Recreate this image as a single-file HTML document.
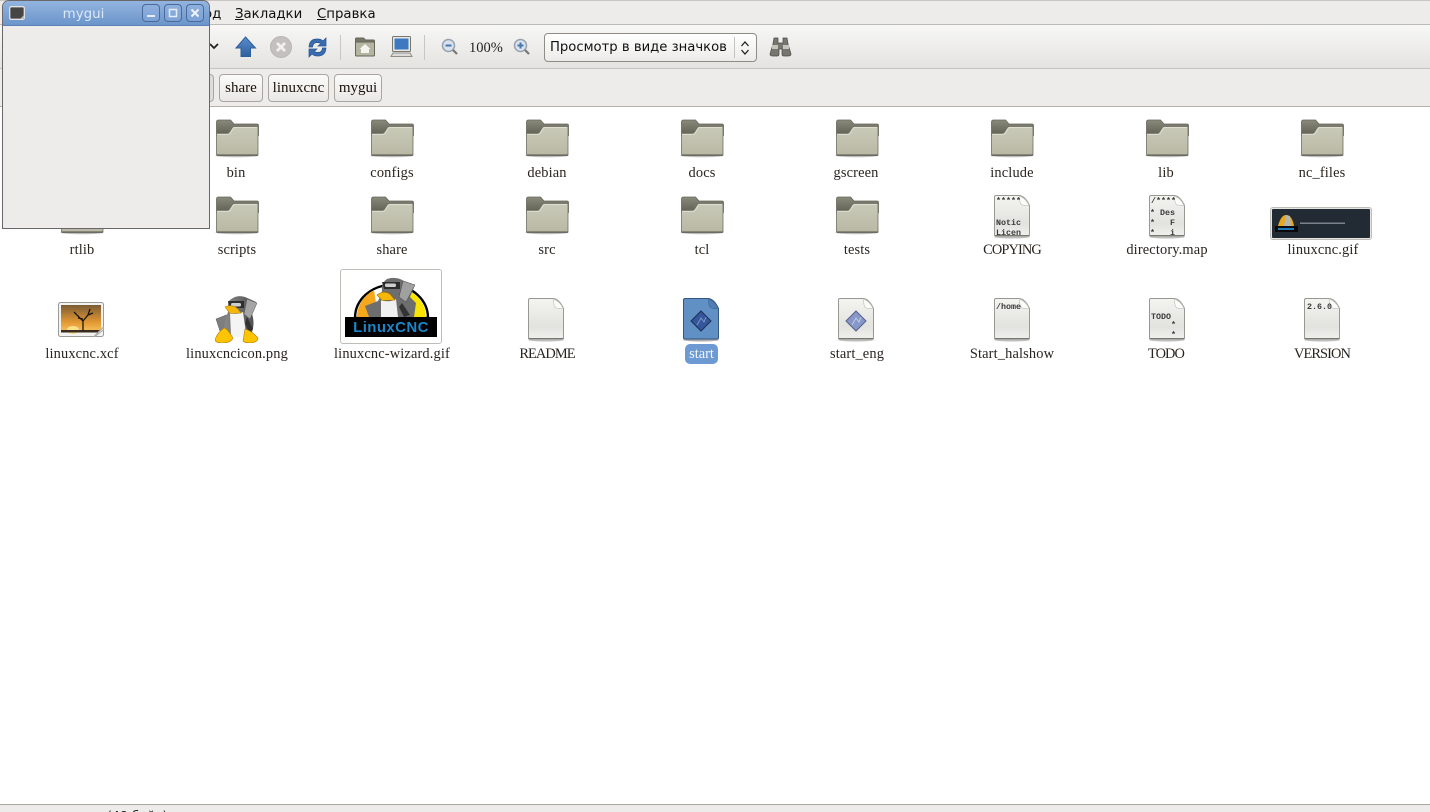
<!DOCTYPE html>
<html lang="ru"><head><meta charset="utf-8"><title>mygui</title>
<style>
html,body{margin:0;padding:0;width:1430px;height:812px;overflow:hidden;background:#fff}
body{position:relative;font-family:"Liberation Serif",serif;color:#1a1a1a}
div,svg,span{position:absolute}
span.u{position:static;text-decoration:underline}
.menubar{left:0;top:0;width:1430px;height:25px;background:#edecea;border-top:1px solid #c8c6c2;box-sizing:border-box}
.menu{top:7px;font:13.3px/16px "DejaVu Sans",sans-serif;color:#111;white-space:nowrap}
.toolbar{left:0;top:24px;width:1430px;height:45px;box-sizing:border-box;background:linear-gradient(#f7f7f6,#e4e3e0);border-top:1px solid #bdbab5;border-bottom:1px solid #c5c3be}
.loc{left:0;top:69px;width:1430px;height:38px;box-sizing:border-box;background:#edecea;border-bottom:1px solid #b5b1ab}
.crumb{top:74px;height:28px;box-sizing:border-box;border:1px solid #a9a6a0;border-radius:4px;background:linear-gradient(#fbfbfa,#e9e8e6);font-size:15px;line-height:26px;text-align:center;color:#1a1208;white-space:nowrap}
.sep{width:1px;top:35px;height:25px;background:#c9c7c3}
.l{width:150px;margin-top:1px;text-align:center;font-size:14.4px;letter-spacing:.15px;line-height:16px;white-space:nowrap;color:#2a2420}
.c{letter-spacing:-.9px}
.combo{left:544px;top:33px;width:213px;height:29px;box-sizing:border-box;border:1px solid #8f8c86;border-radius:4px;background:linear-gradient(#fff,#ecebe9);font:13.2px/27px "DejaVu Sans",sans-serif;color:#111;padding-left:5px;white-space:nowrap}
.status{left:0;top:804px;width:1430px;height:8px;background:#edecea;border-top:1px solid #aca79f;box-sizing:border-box;overflow:hidden}
.win{left:2px;top:0;width:208px;height:229px;box-sizing:border-box;background:#edecea;border:1px solid #68686a;border-radius:7px 7px 0 0;overflow:hidden}
.title{left:0;top:0;width:206px;height:24px;background:linear-gradient(#93b4df,#6b95cb);border-bottom:1px solid #5a80b5}
.wb{top:3px;width:18px;height:18px;box-sizing:border-box;border:1px solid #4a6a9a;border-radius:4px;background:linear-gradient(#8fb1de,#7ba1d4)}
.doctext{font-family:"Liberation Mono",monospace;font-size:8.33px;font-weight:bold;fill:#3a3a3a;white-space:pre}
</style></head><body>

<svg width="0" height="0" style="left:0;top:0">
<defs>
<linearGradient id="fb" x1="0" y1="0" x2="0" y2="1"><stop offset="0" stop-color="#cacab9"/><stop offset="1" stop-color="#b8b8a4"/></linearGradient>
<linearGradient id="bk" x1="0" y1="0" x2="0" y2="1"><stop offset="0" stop-color="#8a8a7b"/><stop offset="1" stop-color="#5e5e52"/></linearGradient>
<linearGradient id="dg" x1="0" y1="0" x2="0" y2="1"><stop offset="0" stop-color="#f4f4f1"/><stop offset=".7" stop-color="#e2e3de"/><stop offset="1" stop-color="#f0f0ee"/></linearGradient>
<linearGradient id="pg" x1="0" y1="0" x2="1" y2="0"><stop offset="0" stop-color="#8a8a8a"/><stop offset="1" stop-color="#4d4d4d"/></linearGradient>
<linearGradient id="up" x1="0" y1="0" x2="0" y2="1"><stop offset="0" stop-color="#5b8ccb"/><stop offset="1" stop-color="#2e5f9f"/></linearGradient>
<linearGradient id="sun" x1="0" y1="0" x2="0" y2="1"><stop offset="0" stop-color="#7a5b35"/><stop offset=".65" stop-color="#e59a33"/><stop offset="1" stop-color="#f4c35f"/></linearGradient>
<symbol id="folder" viewBox="0 0 45 39">
<ellipse cx="22" cy="36.500" rx="21.500" ry="1.800" fill="#888" opacity=".55"/>
<path d="M1.500 3q0-2 2-2h12l3.500 4h23q1.500 0 1.500 1.500v10H1.500z" fill="url(#bk)" stroke="#66665b" stroke-width=".8"/>
<path d="M1.500 14.500h11q1 0 2-1.500l2.500-4q1-1.500 2-1.500h23q1 0 1 1v27q0 1-1 1H2.500q-1 0-1-1z" fill="url(#fb)" stroke="#6f6f65" stroke-width=".8"/>
<path d="M2 15.300h11q1.500 0 2.500-1.500l2.500-4q.8-1.300 2-1.300h22" fill="none" stroke="#e4e4d8" stroke-width=".8"/>
<path d="M2 36h41" stroke="#55554c"/>
</symbol>
<symbol id="doc" viewBox="0 0 38 44">
<ellipse cx="19" cy="41.800" rx="18" ry="1.700" fill="#888" opacity=".55"/>
<path d="M3 .5h23.500q6 1 10 10v29q0 1.500-1.500 1.500h-32q-1.500 0-1.500-1.500v-37.500q0-1.500 1.500-1.500z" fill="url(#dg)" stroke="#989893"/>
<path d="M1.500 40.500h35" stroke="#77776f"/>
<path d="M26.500 1q0 6 1.500 8t8 1.500q-3-7-9.500-9.500z" fill="#fcfcfb" stroke="#c5c5c0" stroke-width=".7"/>
</symbol>
<symbol id="penguin" viewBox="0 0 44 48">
<path d="M14 19 L1 24 L5 36 L15 33z" fill="#7e7e7e" stroke="#555" stroke-width=".5"/>
<path d="M13 7 Q20-1 30 2 L41 7 L36 16 Q41 28 36 40 H10 Q8 28 13 17z" fill="url(#pg)"/>
<path d="M32 4 L42 8 L35 24 L29 19z" fill="#a5a5a5" stroke="#555" stroke-width=".5"/>
<path d="M15 18 Q22 20 28 17 L31 38 Q24 46 16 40z" fill="#f4f4f4"/>
<path d="M32 22 L38 34 L34 38 L30 28z" fill="#333"/>
<path d="M13 6 H29 V13 H15z" fill="#2f2f2f"/><rect x="16" y="8" width="10" height="3.500" rx="1.500" fill="#cfcfcf"/>
<path d="M10 12 Q16 9 22 13 L26 18 L15 18.500z" fill="#f5b70a" stroke="#b27b00" stroke-width=".6"/>
<path d="M0 45 Q2 38 9 33 Q12 33 18 43 Q16 48 7 48 Q1 48 0 45z" fill="#fdc404" stroke="#b27b00" stroke-width=".6"/>
<path d="M28 46 L30 34 Q37 36 43 43 Q43 47 36 48 Q30 48 28 46z" fill="#fdc404" stroke="#b27b00" stroke-width=".6"/>
</symbol>
</defs>
</svg>

<div class="menubar"></div>
<div class="menu" style="left:204px">од</div>
<div class="menu" style="left:235px"><span class="u">З</span>акладки</div>
<div class="menu" style="left:317px"><span class="u">С</span>правка</div>

<div class="toolbar"></div>
<svg style="left:208px;top:42px" width="12" height="9"><path d="M2 2l4 4 4-4" fill="none" stroke="#222" stroke-width="1.800"/></svg>
<svg style="left:235px;top:36px" width="22" height="22"><path d="M10.500 1 L20.500 12 H15.500 V20.500 H6 V12 H1z" fill="url(#up)" stroke="#2c5d9c"/></svg>
<svg style="left:270px;top:36px" width="22" height="22"><circle cx="11" cy="11" r="10.500" fill="#c4c0be" stroke="#b8b5b2"/><path d="M7 7l8 8M15 7l-8 8" stroke="#f1f0ef" stroke-width="2.800"/></svg>
<svg style="left:307px;top:37px" width="21" height="21"><path d="M2 10 Q2.500 2 10 2 Q14 2 16 4 L19 1 V9 H11 L14 6.500 Q12 5.500 10 5.500 Q6 5.500 5.500 10z" fill="#3a6db0" stroke="#265390" stroke-width=".7"/><path d="M19 11 Q18.500 19 11 19 Q7 19 5 17 L2 20 V12 H10 L7 14.500 Q9 15.500 11 15.500 Q15 15.500 15.500 11z" fill="#3a6db0" stroke="#265390" stroke-width=".7"/></svg>
<div class="sep" style="left:340px"></div>
<svg style="left:354px;top:36px" width="21" height="21"><path d="M1.500 3q0-1 1-1h7l2 2h8q1 0 1 1v3h-19z" fill="#77776a" stroke="#66665b"/><rect x="1.500" y="6" width="19" height="14" rx="1" fill="#b4b4a1" stroke="#666659"/><path d="M11 8 L16.500 13 H15 V17 H7 V13 H5.500z" fill="#f4f4f0"/></svg>
<svg style="left:390px;top:35px" width="23" height="23"><rect x="2.500" y="1.500" width="18" height="15" rx="1" fill="#e8e8e6" stroke="#77766f"/><rect x="4.500" y="3.500" width="14" height="11" fill="#3e78c0"/><path d="M1 21.500 L3 18 H20 L22 21.500z" fill="#dcdcd8" stroke="#8f8e88"/></svg>
<div class="sep" style="left:424px"></div>
<svg style="left:441px;top:38px" width="18" height="18"><circle cx="7.500" cy="7.500" r="6" fill="#d9e3ee" stroke="#98a2ae" stroke-width="1.500"/><rect x="4.500" y="6.500" width="6" height="2" fill="#4a76ae"/><path d="M12 12l4 4" stroke="#77776f" stroke-width="2.200"/></svg>
<div style="left:469px;top:40px;font-size:14.500px;line-height:16px;color:#222;white-space:nowrap">100%</div>
<svg style="left:513px;top:38px" width="18" height="18"><circle cx="7.500" cy="7.500" r="6" fill="#d9e3ee" stroke="#98a2ae" stroke-width="1.500"/><path d="M4.500 7.500h6M7.500 4.500v6" stroke="#4a76ae" stroke-width="2"/><path d="M12 12l4 4" stroke="#77776f" stroke-width="2.200"/></svg>
<div class="combo">Просмотр в виде значков
<div style="left:189px;top:3px;width:1px;height:21px;background:#c5c3bf"></div>
<svg style="left:194px;top:6px" width="12" height="16"><path d="M2.500 6l3.500-4 3.500 4M2.500 10l3.500 4 3.500-4" fill="none" stroke="#222" stroke-width="1.300"/></svg>
</div>
<svg style="left:769px;top:37px" width="23" height="20"><path d="M5 1h4v5h5V1h4l1 6 3 10q0 2-3 2h-4q-2 0-2-2v-5h-3v5q0 2-2 2H4q-3 0-3-2L4 7z" fill="#77776f" stroke="#4a4a44" stroke-width=".7"/><rect x="3" y="8" width="6" height="4" fill="#c5c5be"/><rect x="14" y="8" width="6" height="4" fill="#c5c5be"/></svg>

<div class="loc"></div>
<div class="crumb" style="left:150px;width:64px;background:#dedcd9"></div>
<div class="crumb" style="left:219px;width:44px">share</div>
<div class="crumb" style="left:268px;width:61px">linuxcnc</div>
<div class="crumb" style="left:334px;width:48px">mygui</div>

<!-- Row 1 -->
<svg style="left:215px;top:119px" width="45" height="39"><use href="#folder"/></svg><div class="l" style="left:161px;top:164px">bin</div>
<svg style="left:370px;top:119px" width="45" height="39"><use href="#folder"/></svg><div class="l" style="left:317px;top:164px">configs</div>
<svg style="left:525px;top:119px" width="45" height="39"><use href="#folder"/></svg><div class="l" style="left:472px;top:164px">debian</div>
<svg style="left:680px;top:119px" width="45" height="39"><use href="#folder"/></svg><div class="l" style="left:627px;top:164px">docs</div>
<svg style="left:835px;top:119px" width="45" height="39"><use href="#folder"/></svg><div class="l" style="left:781px;top:164px">gscreen</div>
<svg style="left:990px;top:119px" width="45" height="39"><use href="#folder"/></svg><div class="l" style="left:937px;top:164px">include</div>
<svg style="left:1145px;top:119px" width="45" height="39"><use href="#folder"/></svg><div class="l" style="left:1091px;top:164px">lib</div>
<svg style="left:1300px;top:119px" width="45" height="39"><use href="#folder"/></svg><div class="l" style="left:1247px;top:164px">nc_files</div>

<!-- Row 2 -->
<svg style="left:60px;top:196px" width="45" height="39"><use href="#folder"/></svg><div class="l" style="left:7px;top:241px">rtlib</div>
<svg style="left:215px;top:196px" width="45" height="39"><use href="#folder"/></svg><div class="l" style="left:162px;top:241px">scripts</div>
<svg style="left:370px;top:196px" width="45" height="39"><use href="#folder"/></svg><div class="l" style="left:317px;top:241px">share</div>
<svg style="left:525px;top:196px" width="45" height="39"><use href="#folder"/></svg><div class="l" style="left:472px;top:241px">src</div>
<svg style="left:680px;top:196px" width="45" height="39"><use href="#folder"/></svg><div class="l" style="left:627px;top:241px">tcl</div>
<svg style="left:835px;top:196px" width="45" height="39"><use href="#folder"/></svg><div class="l" style="left:782px;top:241px">tests</div>

<svg style="left:993px;top:195px" width="38" height="44"><use href="#doc"/><text class="doctext" x="3" y="8">*****</text><text class="doctext" x="3" y="30">Notic</text><text class="doctext" x="3" y="40">Licen</text></svg><div class="l c" style="left:937px;top:241px">COPYING</div>
<svg style="left:1148px;top:195px" width="38" height="44"><use href="#doc"/><text class="doctext" x="3" y="8">/****</text><text class="doctext" x="2" y="20">* Des</text><text class="doctext" x="2" y="30">*   F</text><text class="doctext" x="2" y="40">*   i</text></svg><div class="l" style="left:1092px;top:241px">directory.map</div>
<div style="left:1270px;top:207px;width:102px;height:33px;box-sizing:border-box;border:2px solid #e6e5e2;outline:1px solid #bfbdb8;outline-offset:-1px;border-radius:3px;background:#222a33"></div>
<svg style="left:1273px;top:210px" width="96" height="27"><path d="M5 16 Q8 5 13 5 Q19 5 21 16z" fill="#e8a91c"/><path d="M11 16 L13 5 L17 6 L18 16z" fill="#b5b5b5"/><rect x="2" y="16" width="23" height="6" fill="#0a0a0a"/><rect x="5" y="18" width="16" height="2" fill="#1c78b6"/><rect x="27" y="12.500" width="45" height="1.500" fill="#7c828b"/></svg>
<div class="l" style="left:1248px;top:241px">linuxcnc.gif</div>

<!-- Row 3 -->
<svg style="left:57px;top:301px" width="48" height="37">
<rect x="1.500" y="1.500" width="45" height="34" rx="2" fill="#f2f2f0" stroke="#9b9a95"/>
<rect x="4" y="4" width="40" height="27" fill="url(#sun)"/><ellipse cx="16" cy="29" rx="6" ry="4" fill="#fbe08c"/><rect x="4" y="29" width="40" height="2.500" fill="#3a2c1d"/>
<path d="M26 30 L26 20 L17 11 M26 20 L31 14 L36 12 M26 18 L21 17 M31 14 L33 8" fill="none" stroke="#1d140d" stroke-width="1.300"/>
<path d="M37 35.500 L46.500 26 V29 Q42 32 38 35.500z" fill="#e6e4e1" stroke="#aaa"/></svg>
<div class="l" style="left:7px;top:345px">linuxcnc.xcf</div>

<svg style="left:215px;top:295px" width="44" height="48"><use href="#penguin"/></svg>
<div class="l" style="left:162px;top:345px">linuxcncicon.png</div>

<div style="left:340px;top:269px;width:102px;height:75px;box-sizing:border-box;border:1px solid #bfbdb8;border-radius:3px;background:#fff"></div>
<svg style="left:344px;top:273px" width="94" height="68">
<path d="M11 45 A36.500 33 0 0 1 84 45z" fill="#fff" stroke="#000" stroke-width="2.400"/>
<path d="M13 44 A34.500 31 0 0 1 30 17 L34 44z" fill="#f6a81c"/>
<path d="M82 44 A34.500 31 0 0 0 64 17 L58 44z" fill="#fbe400"/>
<path d="M34 28 L21 33 L25 44 H70 L72 30 L66 24 L71 12 L60 8 Q52 3 43 6 Q37 10 38 18 L36 24 Z" fill="#6e6e6e"/>
<path d="M37 27 Q45 30 52 26 L54 44 H37z" fill="#f1f1f1"/>
<path d="M59 8 L71 12 L62 29 L55 24z" fill="#a0a0a0" stroke="#444" stroke-width=".5"/>
<path d="M58 30 L66 42 L60 44 L55 34z" fill="#333"/>
<path d="M38 9 H56 V16 H40z" fill="#2d2d2d"/><rect x="41" y="10.500" width="11" height="3.500" rx="1.500" fill="#cfcfcf"/>
<path d="M33 22 Q39 17 46 21 L51 27 L38 27.500z" fill="#f5b70a" stroke="#9d6d00" stroke-width=".6"/>
<rect x="1" y="44" width="92" height="20" fill="#000"/>
<text x="47" y="59" text-anchor="middle" font-family="Liberation Sans,sans-serif" font-weight="bold" font-size="15" letter-spacing=".4" fill="#1a85c8">LinuxCNC</text>
</svg>
<div class="l" style="left:317px;top:345px">linuxcnc-wizard.gif</div>

<svg style="left:527px;top:298px" width="38" height="44"><use href="#doc"/></svg><div class="l c" style="left:472px;top:345px">README</div>

<svg style="left:682px;top:298px" width="38" height="44"><ellipse cx="19" cy="41.800" rx="18" ry="1.700" fill="#777" opacity=".6"/><path d="M3 .5h23.500q6 1 10 10v29q0 1.500-1.500 1.500h-32q-1.500 0-1.500-1.500v-37.500q0-1.500 1.500-1.500z" fill="#6190c4" stroke="#34557e"/><path d="M26.500 1q0 6 1.500 8t8 1.500q-3-7-9.500-9.500z" fill="#4f7fb5" stroke="#3f6a9c" stroke-width=".7"/><svg x="7" y="11" width="24" height="24"><path d="M12 2 L22 12 L12 22 L2 12z" fill="#34569a" stroke="#1d2f57"/><path d="M8 16 L12 9 L15 13 L17 8" fill="none" stroke="#7e97c6"/></svg></svg>
<div style="left:685px;top:344px;width:33px;height:20px;border-radius:5px;background:#6d9ad2;color:#f4f7fb;text-align:center;font-size:14.400px;line-height:20px">start</div>

<svg style="left:837px;top:298px" width="38" height="44"><use href="#doc"/><svg x="7" y="11" width="24" height="24"><path d="M12 2 L22 12 L12 22 L2 12z" fill="#8797c9" stroke="#56628c"/><path d="M8 16 L12 9 L15 13 L17 8" fill="none" stroke="#c2cbe3"/></svg></svg>
<div class="l" style="left:782px;top:345px">start_eng</div>

<svg style="left:993px;top:298px" width="38" height="44"><use href="#doc"/><text class="doctext" x="3" y="11">/home</text></svg><div class="l" style="left:937px;top:345px">Start_halshow</div>
<svg style="left:1148px;top:298px" width="38" height="44"><use href="#doc"/><text class="doctext" x="3" y="21">TODO</text><text class="doctext" x="23" y="29">*</text><text class="doctext" x="23" y="39">*</text></svg><div class="l c" style="left:1091px;top:345px">TODO</div>
<svg style="left:1303px;top:298px" width="38" height="44"><use href="#doc"/><text class="doctext" x="4" y="11">2.6.0</text></svg><div class="l c" style="left:1247px;top:345px">VERSION</div>

<div class="status"><div style="left:107px;top:3px;font:12.500px/16px 'DejaVu Sans',sans-serif;color:#222;white-space:nowrap">(48 байт)</div></div>

<div class="win">
<div class="title">
<svg style="left:6px;top:5px" width="16" height="14"><rect x=".7" y=".7" width="14.600" height="12.600" rx="1.500" fill="#454545" stroke="#e2e2e2" stroke-width="1.300"/><path d="M11 13 L15 9 V13z" fill="#bbb"/></svg>
<div style="left:0;top:6px;width:161px;text-align:center;font:13.400px/16px 'DejaVu Sans',sans-serif;color:#dbe8f8">mygui</div>
<div class="wb" style="left:139px"><svg style="left:3px;top:3px" width="10" height="10"><rect x="1" y="7" width="8" height="2" fill="#e4edf9"/></svg></div>
<div class="wb" style="left:161px"><svg style="left:3px;top:3px" width="10" height="10"><rect x="1.500" y="1.500" width="7" height="7" fill="none" stroke="#e4edf9" stroke-width="1.500"/></svg></div>
<div class="wb" style="left:183px"><svg style="left:3px;top:3px" width="10" height="10"><path d="M1.500 1.500l7 7M8.500 1.500l-7 7" stroke="#eef3fb" stroke-width="2"/></svg></div>
</div>
</div>

</body></html>
